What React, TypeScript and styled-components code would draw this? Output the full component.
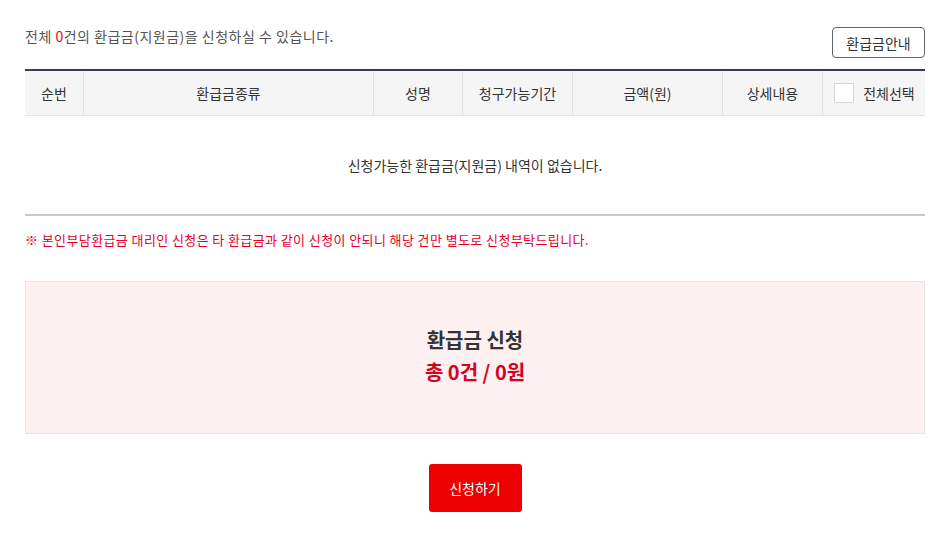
import styled, { createGlobalStyle } from 'styled-components';

const GlobalStyle = createGlobalStyle`
  * { box-sizing: border-box; }
  body {
    margin: 0;
    background: #fff;
    font-family: 'Noto Sans CJK KR', 'Noto Sans', sans-serif;
    color: #333;
  }
`;

const columns = [
  { label: '순번', width: 59 },
  { label: '환급금종류', width: 290 },
  { label: '성명', width: 89 },
  { label: '청구가능기간', width: 110 },
  { label: '금액(원)', width: 150 },
  { label: '상세내용', width: 100 },
];

const App: React.FC = () => {
  const count = 0;
  const amount = 0;

  return (
    <>
      <GlobalStyle />
      <Page>
        {/* Summary + guide button */}
        <TopBar>
          <Summary>
            전체 <Red>{count}</Red>건의 환급금(지원금)을 신청하실 수 있습니다.
          </Summary>
          <GuideButton type="button">환급금안내</GuideButton>
        </TopBar>

        {/* List */}
        <Table>
          <HeadRow>
            {columns.map((col) => (
              <HeadCell key={col.label} $width={col.width}>
                {col.label}
              </HeadCell>
            ))}
            <HeadCell $width={102} $last>
              <CheckLabel>
                <CheckBox type="checkbox" />
                전체선택
              </CheckLabel>
            </HeadCell>
          </HeadRow>
          <EmptyRow>신청가능한 환급금(지원금) 내역이 없습니다.</EmptyRow>
        </Table>

        <Notice>
          ※ 본인부담환급금 대리인 신청은 타 환급금과 같이 신청이 안되니 해당 건만 별도로 신청부탁드립니다.
        </Notice>

        {/* Total */}
        <TotalBox>
          <TotalTitle>환급금 신청</TotalTitle>
          <TotalAmount>
            총 {count}건 / {amount}원
          </TotalAmount>
        </TotalBox>

        <Actions>
          <SubmitButton type="button">신청하기</SubmitButton>
        </Actions>
      </Page>
    </>
  );
};

// Styles
const Page = styled.div`
  width: 900px;
  margin: 0 25px;
  padding-top: 27px;
`;

const TopBar = styled.div`
  display: flex;
  justify-content: space-between;
  align-items: flex-start;
  margin-bottom: 11px;
`;

const Summary = styled.p`
  margin: 0;
  font-size: 14px;
  line-height: 18px;
  letter-spacing: 0.5px;
  color: #555;
`;

const Red = styled.span`
  color: #e8002a;
`;

const GuideButton = styled.button`
  height: 31px;
  width: 93px;
  padding: 0;
  border: 1px solid #5d6470;
  border-radius: 4px;
  background: #fff;
  font-family: inherit;
  font-size: 14px;
  color: #333;
  cursor: pointer;
`;

const Table = styled.div`
  border-top: 2px solid #3c3c4e;
  border-bottom: 2px solid #c9c9cd;
`;

const HeadRow = styled.div`
  display: flex;
  height: 45px;
  background: #f5f5f5;
  border-bottom: 1px solid #e2e2e2;
`;

const HeadCell = styled.div<{ $width: number; $last?: boolean }>`
  width: ${(p) => p.$width}px;
  flex: ${(p) => (p.$last ? '1' : 'none')};
  display: flex;
  align-items: center;
  justify-content: center;
  font-size: 14px;
  color: #333;
  border-right: ${(p) => (p.$last ? 'none' : '1px solid #e2e2e2')};
`;

const CheckLabel = styled.label`
  display: flex;
  align-items: center;
  gap: 9px;
  padding-left: 1px;
`;

const CheckBox = styled.input`
  appearance: none;
  margin: 0;
  width: 20px;
  height: 20px;
  border: 1px solid #d6d6d6;
  background: #fff;
`;

const EmptyRow = styled.div`
  height: 98px;
  display: flex;
  align-items: center;
  justify-content: center;
  font-size: 14px;
  color: #333;
`;

const Notice = styled.p`
  margin: 14px 0 0;
  font-size: 13px;
  line-height: 20px;
  letter-spacing: 0.4px;
  color: #e8002a;
`;

const TotalBox = styled.div`
  margin-top: 31px;
  height: 153px;
  background: #fdf0f1;
  border: 1px solid #e6e6e6;
  display: flex;
  flex-direction: column;
  align-items: center;
  justify-content: center;
  padding-bottom: 4px;
`;

const TotalTitle = styled.div`
  font-size: 20px;
  font-weight: 700;
  line-height: 32px;
  color: #333;
`;

const TotalAmount = styled.div`
  font-size: 20px;
  font-weight: 700;
  line-height: 32px;
  color: #d8001f;
`;

const Actions = styled.div`
  display: flex;
  justify-content: center;
  margin-top: 30px;
`;

const SubmitButton = styled.button`
  width: 93px;
  height: 48px;
  border: none;
  border-radius: 3px;
  background: #ee0000;
  color: #fff;
  font-family: inherit;
  font-size: 14px;
  cursor: pointer;
`;

export default App;
